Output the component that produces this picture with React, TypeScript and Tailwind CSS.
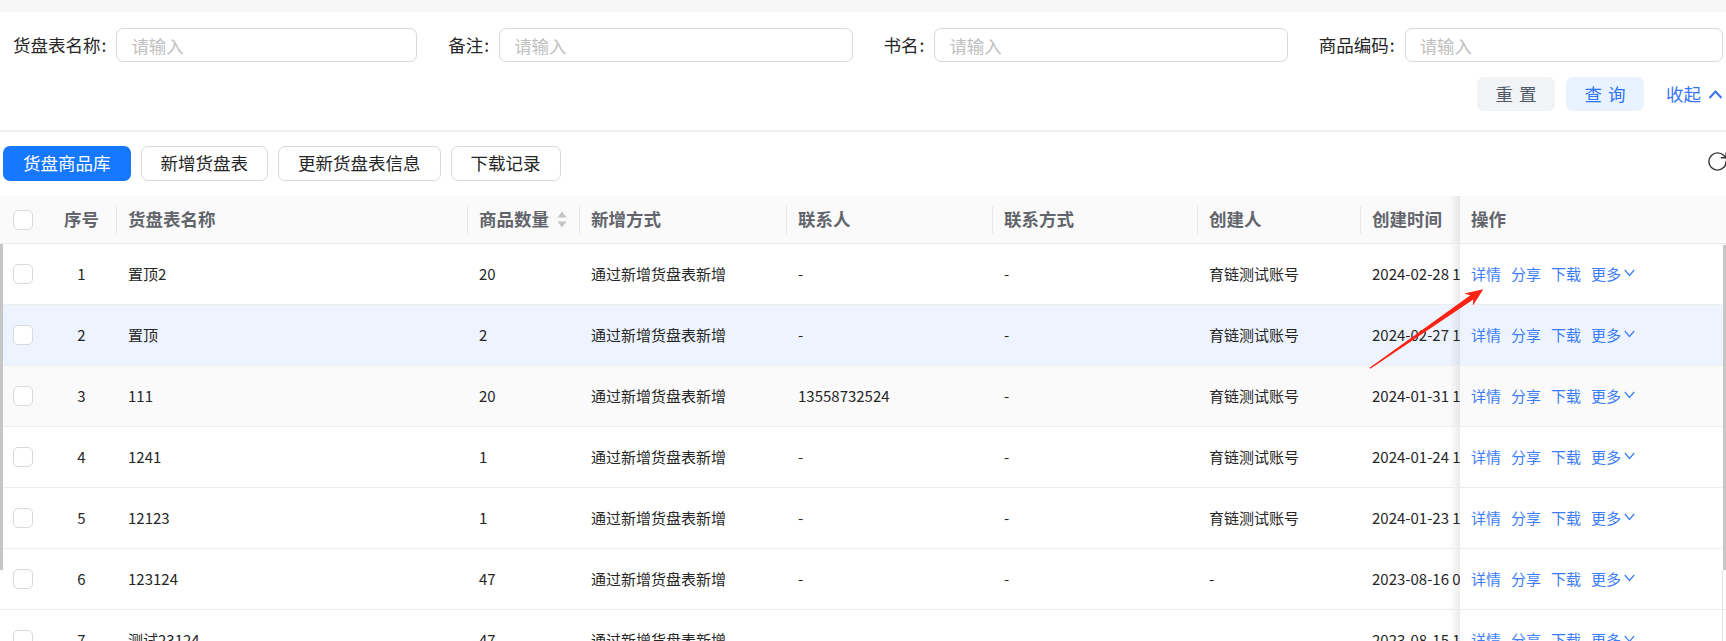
import { RotateCw } from 'lucide-react'

type Row = {
  no: number
  name: string
  count: string
  way: string
  contact: string
  phone: string
  creator: string
  time: string
  bg: string
}

const rows: Row[] = [
  { no: 1, name: '置顶2', count: '20', way: '通过新增货盘表新增', contact: '-', phone: '-', creator: '育链测试账号', time: '2024-02-28 16:20:11', bg: 'bg-white' },
  { no: 2, name: '置顶', count: '2', way: '通过新增货盘表新增', contact: '-', phone: '-', creator: '育链测试账号', time: '2024-02-27 15:42:08', bg: 'bg-[#eef4ff]' },
  { no: 3, name: '111', count: '20', way: '通过新增货盘表新增', contact: '13558732524', phone: '-', creator: '育链测试账号', time: '2024-01-31 10:05:33', bg: 'bg-[#fafafa]' },
  { no: 4, name: '1241', count: '1', way: '通过新增货盘表新增', contact: '-', phone: '-', creator: '育链测试账号', time: '2024-01-24 11:18:40', bg: 'bg-white' },
  { no: 5, name: '12123', count: '1', way: '通过新增货盘表新增', contact: '-', phone: '-', creator: '育链测试账号', time: '2024-01-23 14:27:51', bg: 'bg-white' },
  { no: 6, name: '123124', count: '47', way: '通过新增货盘表新增', contact: '-', phone: '-', creator: '-', time: '2023-08-16 09:12:02', bg: 'bg-white' },
  { no: 7, name: '测试23124', count: '47', way: '通过新增货盘表新增', contact: '-', phone: '-', creator: '-', time: '2023-08-15 17:36:24', bg: 'bg-white' },
]

function Field({ label }: { label: string }) {
  return (
    <div className="flex items-center h-[34px]">
      <span className="text-[17.5px] text-[#262626] whitespace-nowrap">
        {label}
        <span className="ml-[1px] mr-[10px]">:</span>
      </span>
      <input
        placeholder="请输入"
        className="min-w-0 flex-1 h-[34px] border border-[#d9d9d9] rounded-[7px] pl-[14px] text-[17.5px] outline-none placeholder:text-[#c0c0c0]"
      />
    </div>
  )
}

function Checkbox() {
  return <span className="block w-[20px] h-[20px] rounded-[5px] border border-[#d9d9d9] bg-white" />
}

function SortIcon() {
  return (
    <svg width="10" height="17" viewBox="0 0 10 17" className="ml-[8px]">
      <path d="M5 0.5 L9.5 6.5 H0.5 Z" fill="#c4c4c4" />
      <path d="M5 16.5 L9.5 10.5 H0.5 Z" fill="#c4c4c4" />
    </svg>
  )
}

// header cell with the little divider on its right
const sep =
  "relative after:content-[''] after:absolute after:right-0 after:top-[10px] after:h-[28px] after:w-px after:bg-[#e8e8e8]"

const fixedShadow =
  "relative before:content-[''] before:absolute before:left-[-10px] before:top-0 before:bottom-0 before:w-[10px] before:bg-gradient-to-l before:from-[rgba(0,0,0,0.08)] before:to-transparent"

export default function App() {
  return (
    <div className="relative w-[1726px] h-[641px] overflow-hidden bg-white font-['Noto_Sans_CJK_SC',sans-serif] text-[#262626]">
      <div className="h-[12px] bg-[#f7f7f7]" />

      {/* 搜索区 */}
      <div className="pl-[13px] pr-[3px] pt-[16px] pb-[19px]">
        <div className="grid grid-cols-4 gap-x-[31px]">
          <Field label="货盘表名称" />
          <Field label="备注" />
          <Field label="书名" />
          <Field label="商品编码" />
        </div>
        <div className="flex justify-end items-center mt-[15px]">
          <button className="w-[78px] h-[34px] rounded-[7px] bg-[#f2f3f5] text-[17.5px] text-[#4e5969]">
            <span className="tracking-[6px] mr-[-6px]">重置</span>
          </button>
          <button className="ml-[11px] w-[78px] h-[34px] rounded-[7px] bg-[#e8f3ff] text-[17.5px] text-[#2f74f5]">
            <span className="tracking-[6px] mr-[-6px]">查询</span>
          </button>
          <span className="ml-[22px] text-[17.5px] text-[#3874f6]">收起</span>
          <svg width="15" height="11" viewBox="0 0 15 11" className="ml-[7px]">
            <path d="M1.5 9 L7.5 2.5 L13.5 9" fill="none" stroke="#3874f6" strokeWidth="2" />
          </svg>
        </div>
      </div>

      <div className="h-[2px] bg-[#f0f0f0]" />

      {/* 工具栏 */}
      <div className="flex items-center pl-[3px] pt-[14px]">
        <div className="flex gap-[10px] text-[17.5px]">
          <button className="h-[35px] px-[20px] rounded-[7px] bg-[#1677ff] text-white">货盘商品库</button>
          <button className="h-[35px] px-[19px] rounded-[7px] border border-[#d9d9d9] bg-white">新增货盘表</button>
          <button className="h-[35px] px-[19px] rounded-[7px] border border-[#d9d9d9] bg-white">更新货盘表信息</button>
          <button className="h-[35px] px-[19px] rounded-[7px] border border-[#d9d9d9] bg-white">下载记录</button>
        </div>
        <RotateCw size={23} strokeWidth={1.5} className="ml-auto mr-[-3px] mt-[-4px] shrink-0 text-[#333]" />
      </div>

      {/* 表格 */}
      <div className="mt-[15px]">
        <div className="flex h-[48px] bg-[#fafafa] border-b border-[#ebebeb] text-[17.5px] font-bold text-[#62656b]">
          <div className="w-[46px] shrink-0 flex items-center justify-center">
            <Checkbox />
          </div>
          <div className={`w-[71px] shrink-0 flex items-center justify-center ${sep}`}>序号</div>
          <div className={`w-[351px] shrink-0 flex items-center px-[11px] ${sep}`}>货盘表名称</div>
          <div className={`w-[112px] shrink-0 flex items-center px-[11px] ${sep}`}>
            商品数量
            <SortIcon />
          </div>
          <div className={`w-[207px] shrink-0 flex items-center px-[11px] ${sep}`}>新增方式</div>
          <div className={`w-[206px] shrink-0 flex items-center px-[11px] ${sep}`}>联系人</div>
          <div className={`w-[205px] shrink-0 flex items-center px-[11px] ${sep}`}>联系方式</div>
          <div className={`w-[163px] shrink-0 flex items-center px-[11px] ${sep}`}>创建人</div>
          <div className="w-[99px] shrink-0 flex items-center px-[11px] whitespace-nowrap overflow-hidden">创建时间</div>
          <div className={`flex-1 flex items-center px-[11px] bg-[#fafafa] ${fixedShadow}`}>操作</div>
        </div>

        {rows.map((r) => (
          <div key={r.no} className={`flex h-[61px] border-b border-[#ededed] text-[15px] ${r.bg}`}>
            <div className="w-[46px] shrink-0 flex items-center justify-center">
              <Checkbox />
            </div>
            <div className="w-[71px] shrink-0 flex items-center justify-center">{r.no}</div>
            <div className="w-[351px] shrink-0 flex items-center px-[11px]">{r.name}</div>
            <div className="w-[112px] shrink-0 flex items-center px-[11px]">{r.count}</div>
            <div className="w-[207px] shrink-0 flex items-center px-[11px]">{r.way}</div>
            <div className="w-[206px] shrink-0 flex items-center px-[11px]">{r.contact}</div>
            <div className="w-[205px] shrink-0 flex items-center px-[11px]">{r.phone}</div>
            <div className="w-[163px] shrink-0 flex items-center px-[11px]">{r.creator}</div>
            <div className="w-[99px] shrink-0 flex items-center pl-[11px] whitespace-nowrap overflow-hidden">{r.time}</div>
            <div className={`flex-1 flex items-center px-[11px] gap-[10px] text-[#3d7ef8] ${r.bg} ${fixedShadow}`}>
              <span>详情</span>
              <span>分享</span>
              <span>下载</span>
              <span className="flex items-center">
                更多
                <svg width="11" height="8" viewBox="0 0 11 8" className="ml-[3px] mt-[-3px]">
                  <path d="M0.8 1 L5.5 6.5 L10.2 1" fill="none" stroke="#3d7ef8" strokeWidth="1.2" />
                </svg>
              </span>
            </div>
          </div>
        ))}
      </div>

      {/* 滚动条 */}
      <div className="absolute left-0 top-[244px] w-[3px] h-[326px] bg-[#c6c6c6]" />
      <div className="absolute right-0 top-[245px] w-[3px] h-[325px] bg-[#c6c6c6]" />
      <div className="absolute right-[3px] top-[570px] w-px h-[71px] bg-[#e4e4e4]" />

      {/* 标注箭头 */}
      <svg width="135" height="95" viewBox="0 0 135 95" className="absolute left-[1360px] top-[280px]">
        <polygon
          points="9.6,87.73 110.32,15.18 104.24,13.45 123.3,9.3 112.82,25.75 113.3,19.44 10.4,88.87"
          fill="#fa2314"
        />
      </svg>
    </div>
  )
}
